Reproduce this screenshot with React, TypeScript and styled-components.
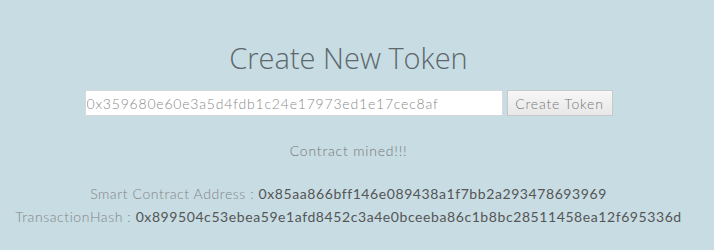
import styled, { createGlobalStyle } from 'styled-components'

const GlobalStyle = createGlobalStyle`
  body {
    margin: 0;
    background-color: #c7dce3;
    font-family: Lato, 'Open Sans', sans-serif;
  }
`

const Page = styled.main`
  display: flex;
  flex-direction: column;
  align-items: center;
  width: calc(100% - 17px);
  padding-top: 38px;
`

const Title = styled.h1`
  margin: 0;
  font-family: 'Open Sans', sans-serif;
  font-weight: 300;
  font-size: 29px;
  line-height: 40px;
  color: #5e686c;
`

const Form = styled.form`
  display: flex;
  gap: 4px;
  margin-top: 12px;
`

const AddressInput = styled.input`
  box-sizing: border-box;
  width: 418px;
  height: 26px;
  padding: 0 1px;
  border: 1px solid #d8d8d8;
  background: #fff;
  font-family: Lato, sans-serif;
  font-weight: 300;
  font-size: 14px;
  letter-spacing: 0.8px;
  color: #8a8a8a;
  outline: none;
`

const SubmitButton = styled.button`
  box-sizing: border-box;
  width: 106px;
  height: 26px;
  padding: 0;
  border: 1px solid #c8c8c8;
  background: linear-gradient(#f7f7f7, #e8e8e8);
  font-family: Lato, sans-serif;
  font-weight: 300;
  font-size: 14px;
  letter-spacing: 0.8px;
  color: #777;
`

const Status = styled.p`
  margin: 26px 0 0;
  font-weight: 300;
  font-size: 14px;
  letter-spacing: 0.8px;
  color: #777;
`

const Details = styled.div`
  display: flex;
  flex-direction: column;
  align-items: center;
  gap: 4px;
  margin-top: 25px;
`

const DetailRow = styled.div`
  font-size: 14px;
  line-height: 19px;
  letter-spacing: 0.58px;
  white-space: nowrap;
`

const Label = styled.span`
  font-weight: 300;
  color: #858585;
`

const Value = styled.span`
  font-weight: 400;
  color: #555;
`

export default function App() {
  return (
    <>
      <GlobalStyle />
      <Page>
        <Title>Create New Token</Title>
        <Form onSubmit={(e) => e.preventDefault()}>
          <AddressInput defaultValue="0x359680e60e3a5d4fdb1c24e17973ed1e17cec8af" />
          <SubmitButton type="submit">Create Token</SubmitButton>
        </Form>
        <Status>Contract mined!!!</Status>
        <Details>
          <DetailRow>
            <Label>Smart Contract Address : </Label>
            <Value>0x85aa866bff146e089438a1f7bb2a293478693969</Value>
          </DetailRow>
          <DetailRow>
            <Label>TransactionHash : </Label>
            <Value>0x899504c53ebea59e1afd8452c3a4e0bceeba86c1b8bc28511458ea12f695336d</Value>
          </DetailRow>
        </Details>
      </Page>
    </>
  )
}
